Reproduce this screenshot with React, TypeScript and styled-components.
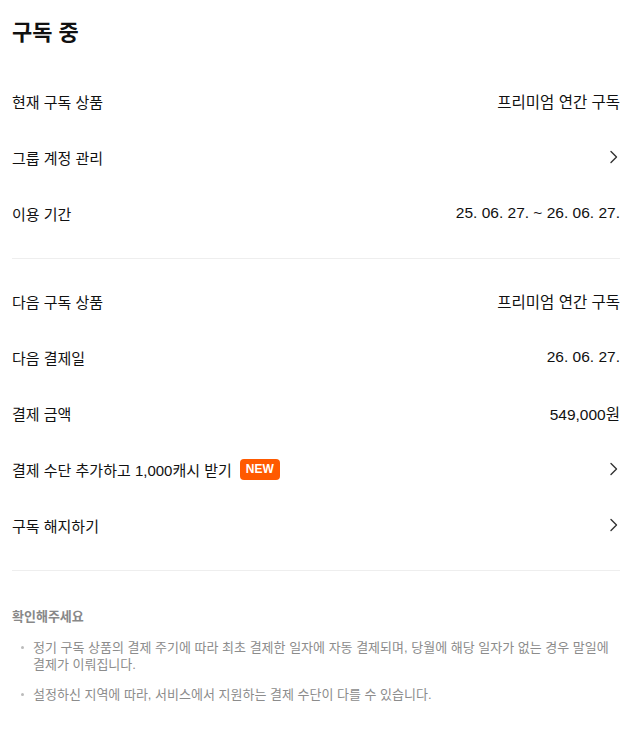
import styled, { createGlobalStyle } from "styled-components";

const Global = createGlobalStyle`
  body {
    margin: 0;
    background: #fff;
    font-family: "Liberation Sans", "Noto Sans CJK KR", "Noto Sans", sans-serif;
    color: #111;
  }
`;

const Page = styled.div`
  padding: 18px 19px 30px 12px;
`;

const Title = styled.h1`
  margin: 0 0 25px;
  font-size: 22px;
  line-height: 30px;
  font-weight: 700;
`;

const Section = styled.div<{ $top?: number; $bottom?: number }>`
  display: flex;
  flex-direction: column;
  padding-top: ${(p) => p.$top ?? 0}px;
  padding-bottom: ${(p) => p.$bottom ?? 0}px;
`;

const Divider = styled.hr`
  margin: 0;
  border: none;
  border-top: 1px solid #eeeeee;
`;

const Row = styled.div`
  display: flex;
  align-items: center;
  justify-content: space-between;
  height: 56px;
  font-size: 15px;
`;

const Label = styled.span`
  display: flex;
  align-items: center;
  gap: 8px;
`;

const Value = styled.span`
  font-size: 15.5px;
`;

const Badge = styled.span`
  display: inline-flex;
  align-items: center;
  height: 21px;
  padding: 0 6px;
  border-radius: 4px;
  background: #ff5a00;
  color: #fff;
  font-size: 12px;
  font-weight: 700;
`;

const Notice = styled.div`
  padding-top: 35px;
`;

const NoticeTitle = styled.div`
  font-size: 13px;
  font-weight: 700;
  color: #888;
  margin-bottom: 14px;
`;

const List = styled.ul`
  list-style: none;
  margin: 0;
  padding: 0;
  display: flex;
  flex-direction: column;
  gap: 13px;
`;

const Item = styled.li`
  position: relative;
  padding-left: 21px;
  font-size: 13px;
  line-height: 17px;
  color: #8c8c8c;
  word-break: keep-all;
  &::before {
    content: "";
    position: absolute;
    left: 9px;
    top: 7px;
    width: 3px;
    height: 3px;
    border-radius: 50%;
    background: #bbb;
  }
`;

function Chevron() {
  return (
    <svg width="14" height="14" viewBox="0 0 14 14" fill="none">
      <path d="M5 1.5 L10.5 7 L5 12.5" stroke="#333" strokeWidth="1.4" strokeLinecap="round" strokeLinejoin="round" />
    </svg>
  );
}

export default function App() {
  return (
    <>
      <Global />
      <Page>
        <Title>구독 중</Title>
        <Section $bottom={17}>
          <Row>
            <Label>현재 구독 상품</Label>
            <Value>프리미엄 연간 구독</Value>
          </Row>
          <Row>
            <Label>그룹 계정 관리</Label>
            <Chevron />
          </Row>
          <Row>
            <Label>이용 기간</Label>
            <Value>25. 06. 27. ~ 26. 06. 27.</Value>
          </Row>
        </Section>
        <Divider />
        <Section $top={14} $bottom={17}>
          <Row>
            <Label>다음 구독 상품</Label>
            <Value>프리미엄 연간 구독</Value>
          </Row>
          <Row>
            <Label>다음 결제일</Label>
            <Value>26. 06. 27.</Value>
          </Row>
          <Row>
            <Label>결제 금액</Label>
            <Value>549,000원</Value>
          </Row>
          <Row>
            <Label>
              결제 수단 추가하고 1,000캐시 받기 <Badge>NEW</Badge>
            </Label>
            <Chevron />
          </Row>
          <Row>
            <Label>구독 해지하기</Label>
            <Chevron />
          </Row>
        </Section>
        <Divider />
        <Notice>
          <NoticeTitle>확인해주세요</NoticeTitle>
          <List>
            <Item>
              정기 구독 상품의 결제 주기에 따라 최초 결제한 일자에 자동 결제되며, 당월에 해당 일자가 없는 경우 말일에 결제가 이뤄집니다.
            </Item>
            <Item>설정하신 지역에 따라, 서비스에서 지원하는 결제 수단이 다를 수 있습니다.</Item>
          </List>
        </Notice>
      </Page>
    </>
  );
}
